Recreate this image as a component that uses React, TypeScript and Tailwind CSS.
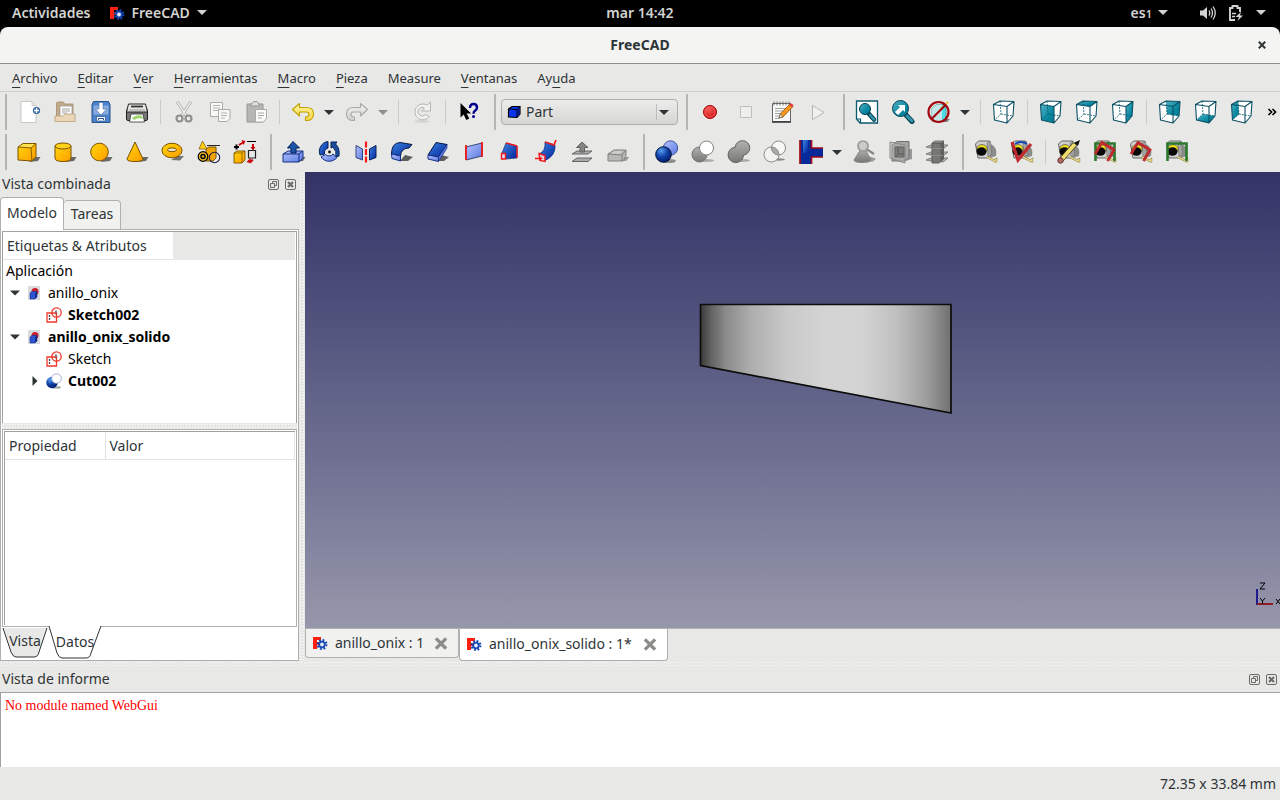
import React from 'react';

interface IconProps {
  className?: string;
  children: React.ReactNode;
}

function Icon({ className = 'w-6 h-6', children }: IconProps) {
  return (
    <svg viewBox="0 0 24 24" className={className} fill="none" aria-hidden="true">
      {children}
    </svg>
  );
}

// Gradients shared by every icon
function Gradients() {
  return (
    <svg className="absolute w-0 h-0" aria-hidden="true">
      <defs>
        <linearGradient id="gold" x1="0" y1="0" x2="1" y2="1">
          <stop offset="0" stopColor="#ffd60a" />
          <stop offset="1" stopColor="#ff9d00" />
        </linearGradient>
        <linearGradient id="blue" x1="0" y1="0" x2="1" y2="1">
          <stop offset="0" stopColor="#3d84e0" />
          <stop offset="1" stopColor="#00239b" />
        </linearGradient>
        <linearGradient id="lightBlue" x1="0" y1="0" x2="1" y2="1">
          <stop offset="0" stopColor="#b5c6ff" />
          <stop offset="1" stopColor="#5a77e0" />
        </linearGradient>
        <linearGradient id="gray" x1="0" y1="0" x2="0" y2="1">
          <stop offset="0" stopColor="#b2b2b0" />
          <stop offset="1" stopColor="#777775" />
        </linearGradient>
        <linearGradient id="teal" x1="0" y1="0" x2="1" y2="1">
          <stop offset="0" stopColor="#55b4c8" />
          <stop offset="0.6" stopColor="#0a88a0" />
          <stop offset="1" stopColor="#037c93" />
        </linearGradient>
        <linearGradient id="silver" x1="0" y1="0" x2="0" y2="1">
          <stop offset="0" stopColor="#f3f3f2" />
          <stop offset="1" stopColor="#cfcfcd" />
        </linearGradient>
        <linearGradient id="butter" x1="0" y1="0" x2="0" y2="1">
          <stop offset="0" stopColor="#fff6a0" />
          <stop offset="1" stopColor="#f2d648" />
        </linearGradient>
        <radialGradient id="blueBall" cx="0.35" cy="0.25" r="0.8">
          <stop offset="0" stopColor="#5aa0f0" />
          <stop offset="0.5" stopColor="#1243a8" />
          <stop offset="1" stopColor="#00186a" />
        </radialGradient>
        <radialGradient id="redBall" cx="0.4" cy="0.3" r="0.8">
          <stop offset="0" stopColor="#f65a5a" />
          <stop offset="1" stopColor="#cc0c0c" />
        </radialGradient>
        <linearGradient id="ring">
          <stop offset="0" stopColor="#3a3a3a" />
          <stop offset="0.04" stopColor="#606060" />
          <stop offset="0.1" stopColor="#8a8a8a" />
          <stop offset="0.2" stopColor="#adadad" />
          <stop offset="0.35" stopColor="#cacaca" />
          <stop offset="0.5" stopColor="#d4d4d4" />
          <stop offset="0.65" stopColor="#d3d3d3" />
          <stop offset="0.78" stopColor="#c0c0c0" />
          <stop offset="0.9" stopColor="#9e9e9e" />
          <stop offset="1" stopColor="#707070" />
        </linearGradient>
      </defs>
    </svg>
  );
}

const Logo = () => (
  <svg viewBox="0 0 16 16" className="w-4 h-4 shrink-0" aria-hidden="true">
    <path d="M1 2h8v3H5v2h3v3H5v4H1z" fill="#ff2010" />
    <circle cx="10" cy="9.500" r="4.500" fill="none" stroke="#1546b5" strokeWidth="2" strokeDasharray="1.800 1.734" />
    <circle cx="10" cy="9.500" r="2.800" fill="#e8ecf5" stroke="#1546b5" strokeWidth="1.800" />
  </svg>
);

const Shadow = () => <path d="M12 22l9-1 2.500-4H16z" fill="#000" fillOpacity="0.550" />;

/* File and edit icons */
const NewIcon = () => (
  <Icon>
    <path d="M4 1.500h11l4 4V22.500H4z" fill="#fff" stroke="#bdbdbb" strokeWidth="0.800" />
    <path d="M15 1.500v4h4" fill="#e4e4e2" stroke="#c4c4c2" strokeWidth="0.700" />
    <circle cx="19.500" cy="10.500" r="3.600" fill="#3465a4" />
    <path d="M19.500 8v5M17 10.500h5" stroke="#fff" strokeWidth="1.300" />
  </Icon>
);
const OpenIcon = () => (
  <Icon>
    <path d="M3.500 21V3l1-1h6l1 2h8.500V21z" fill="#c3ab89" stroke="#a38b68" strokeWidth="0.800" />
    <path d="M7 6h12v12H7z" fill="#fff" stroke="#999" strokeWidth="0.800" />
    <path d="M9 9h8M9 11h8M9 13h5" stroke="#999" strokeWidth="0.900" />
    <path d="M2 21.500v-5.500h8l2-2h10v7.500z" fill="#ecd6b8" stroke="#b99f79" strokeWidth="0.800" />
  </Icon>
);
const SaveIcon = () => (
  <Icon>
    <path d="M4.500 1.500h15l1.500 3v18H3v-18z" fill="#4b83cb" stroke="#27538f" />
    <path d="M4.500 5.500h15v9h-15z" fill="#86abe0" />
    <path d="M10 2.500h4V9h3.500L12 15 6.500 9H10z" fill="#fff" stroke="#4b71a8" strokeWidth="0.600" />
    <path d="M7.500 21v-4.500h9V21z" fill="#fff" stroke="#27538f" strokeWidth="0.700" />
    <path d="M9.500 20v-1.500h5V20" stroke="#27538f" />
  </Icon>
);
const PrintIcon = () => (
  <Icon>
    <rect x="1.500" y="9" width="21" height="11.500" rx="1.500" fill="#777" stroke="#1e1e1e" />
    <path d="M3.500 4h17l2 8h-21z" fill="#e6e6e4" stroke="#222" />
    <path d="M6 6.500h12" stroke="#333" strokeWidth="1.800" />
    <path d="M4 10h16" stroke="#aaa" strokeWidth="1.200" />
    <path d="M6 14h12l1.500 8h-15z" fill="#fff" stroke="#333" strokeWidth="0.800" />
    <path d="M7 18q5-4 10-2l1 3q-5-2-9 1z" fill="#9fd36c" />
  </Icon>
);
const CutIcon = () => (
  <Icon>
    <path d="M5 1.500L14.500 16M19 1.500L9.500 16" stroke="#a7a7a5" strokeWidth="3" />
    <path d="M5 1.500L14.500 16M19 1.500L9.500 16" stroke="#eee" strokeWidth="1.400" />
    <circle cx="7.500" cy="18.500" r="3" stroke="#8f8f8d" strokeWidth="2.200" />
    <circle cx="16.500" cy="18.500" r="3" stroke="#8f8f8d" strokeWidth="2.200" />
  </Icon>
);
const CopyIcon = () => (
  <Icon>
    <path d="M2.500 2.500h12v14h-12z" fill="#f8f8f7" stroke="#aaaaa8" />
    <path d="M5 5.500h7M5 8h7M5 10.500h7" stroke="#b4b4b2" strokeWidth="1.200" />
    <path d="M10.500 9.500h11.500v9l-3 3h-8.500z" fill="#f8f8f7" stroke="#aaaaa8" />
    <path d="M13 13h6M13 15.500h6M13 18h4" stroke="#b4b4b2" strokeWidth="1.200" />
  </Icon>
);
const PasteIcon = () => (
  <Icon>
    <path d="M3 4h16v18H3z" fill="#b6b6b4" stroke="#969694" />
    <path d="M7 6V4l3-2.500h3L15 4v2z" fill="#ddd" stroke="#969694" />
    <path d="M11.500 9.500h11v9l-3 3.500h-8z" fill="#fafaf9" stroke="#aaaaa8" />
    <path d="M14 13h6M14 15.500h6M14 18h4" stroke="#aaa" strokeWidth="1.200" />
  </Icon>
);
const undoPath = 'M8.500 3.500L1.500 9.500l7 6.500v-4h7q2.500 0 2.500 2.500T14.500 17v3.500q8 .5 8-6.500 0-6.500-7-6.500h-7z';
const UndoIcon = () => (
  <Icon>
    <path d={undoPath} fill="url(#butter)" stroke="#c4a000" strokeWidth="1.100" strokeLinejoin="round" />
  </Icon>
);
const RedoIcon = () => (
  <Icon>
    <path d={undoPath} transform="matrix(-1 0 0 1 24 0)" fill="url(#silver)" stroke="#a9a9a7" strokeWidth="1.100" strokeLinejoin="round" />
  </Icon>
);
const RefreshIcon = () => (
  <Icon>
    <ellipse cx="12" cy="21.500" rx="8" ry="1.500" fill="#d4d4d2" />
    <path d="M19.500 16.500A8 8 0 1 1 17 5L20.500 2v9h-9L14.500 8A4.300 4.300 0 1 0 15.500 14.500z" fill="#f1f1f0" stroke="#b5b5b3" strokeLinejoin="round" />
  </Icon>
);
const WhatsThisIcon = () => (
  <Icon>
    <path d="M3.500 3v14.500l3.200-3 2.600 5.500 3-1.500-2.700-5h4.500z" fill="#000" />
    <path d="M13 8q0-4 3.500-4T20 7.500q0 2-2 3.200-1.500 1-1.500 3" stroke="#000090" strokeWidth="2.400" />
    <circle cx="16.500" cy="16.500" r="1.500" fill="#000090" />
  </Icon>
);

/* Macro icons */
const RecordIcon = () => (
  <Icon>
    <circle cx="12" cy="12" r="6.500" fill="url(#redBall)" stroke="#a40000" />
    <circle cx="12" cy="12" r="5" stroke="#ff7070" strokeWidth="0.700" />
  </Icon>
);
const StopIcon = () => (
  <Icon>
    <path d="M6.500 6.500h11v11h-11z" fill="#efefee" stroke="#bebebc" />
  </Icon>
);
const MacroIcon = () => (
  <Icon>
    <path d="M2.500 3.500h18v18h-18z" fill="#fafafa" stroke="#666" />
    <path d="M2 22h19" stroke="#333" strokeWidth="1.500" />
    <path d="M4 1.500v4M7 1.500v4M10 1.500v4M13 1.500v4M16 1.500v4M19 1.500v4" stroke="#666" strokeWidth="0.900" />
    <path d="M5 8.500h11M5 11h9M5 13.500h6M5 16h4M5 18.500h4" stroke="#999" strokeWidth="0.900" />
    <path d="M9 18l1.500-4.500L20 4l3 2.500L13 17z" fill="#f7971d" stroke="#8a4a00" strokeWidth="0.700" />
    <path d="M9 18l1.500-4.500L13 17z" fill="#f5dfb8" stroke="#333" strokeWidth="0.500" />
    <path d="M19 5l1.500-2 3 2-1.500 2.500z" fill="#e23b3b" />
  </Icon>
);
const PlayIcon = () => (
  <Icon>
    <path d="M6.500 5.500v14L18 12.500z" fill="#f1f1f0" stroke="#b6b6b4" />
  </Icon>
);

/* View icons */
const FitAllIcon = () => (
  <Icon>
    <path d="M1.500 1h21v22H5l-3.500-4z" fill="#fff" stroke="#0b5a70" strokeWidth="1.300" />
    <path d="M2 19h3.500v4" stroke="#0b5a70" strokeWidth="1.200" />
    <path d="M14 14l5 5.500" stroke="#073f50" strokeWidth="4.500" strokeLinecap="round" />
    <path d="M15 15l4 4.500" stroke="#2f95ab" strokeWidth="2.500" strokeLinecap="round" />
    <circle cx="10" cy="9" r="5.500" fill="url(#teal)" stroke="#073f50" />
  </Icon>
);
const FitSelectionIcon = () => (
  <Icon>
    <path d="M15 15l6 6.500" stroke="#073f50" strokeWidth="5" strokeLinecap="round" />
    <path d="M16 16l5 5" stroke="#2f95ab" strokeWidth="3" strokeLinecap="round" />
    <circle cx="9.500" cy="8.500" r="8" fill="url(#teal)" stroke="#073f50" />
    <path d="M4 12l5-5-2-2h7v7l-2-2-5 5z" fill="#fff" />
  </Icon>
);
const DrawStyleIcon = () => (
  <Icon>
    <path d="M10 22h10l3-3h-4z" fill="#777" />
    <path d="M5 8l5-3.500h9V18l-3 3H5z" fill="#4fdfe2" stroke="#12818c" strokeWidth="0.700" />
    <path d="M5 8l5-3.500h5V21H5z" fill="#c5e6e6" />
    <path d="M14 9l7-7" stroke="#f2c01c" strokeWidth="2" strokeDasharray="3 1" />
    <circle cx="11.500" cy="12" r="10" stroke="#a3060e" strokeWidth="2.200" />
    <path d="M4.500 5L18.500 19" stroke="#a3060e" strokeWidth="2.200" transform="matrix(-1 0 0 1 23 0)" />
  </Icon>
);

const cubeFaces = {
  none: '',
  front: 'M1.500 4.500L15 6.500V23L2.500 20z',
  top: 'M1.500 4.500L8 1L22 1.500L15 6.500z',
  right: 'M15 6.500L22 1.500L21 16L15 23z',
  rear: 'M8 1L22 1.500L21 16L9 14z',
  bottom: 'M2.500 20L9 14L21 16L15 23z',
  left: 'M1.500 4.500L8 1L9 14L2.500 20z',
};

function ViewCube({ face }: { face: keyof typeof cubeFaces }) {
  return (
    <Icon>
      <path d="M1.500 4.500L8 1L22 1.500L21 16L15 23L2.500 20z" fill="#fff" />
      <path d={cubeFaces[face]} fill="url(#teal)" />
      <path d="M8 1L9 14L2.500 20M9 14L21 16" stroke="#0b5a70" strokeWidth="0.800" strokeDasharray="2 1" />
      <path
        d="M1.500 4.500L8 1L22 1.500L21 16L15 23L2.500 20zM1.500 4.500L15 6.500V23M15 6.500L22 1.500"
        stroke="#0b4f63"
        strokeWidth="1.100"
        strokeLinejoin="round"
      />
    </Icon>
  );
}

/* Primitive icons */
const BoxIcon = () => (
  <Icon>
    <Shadow />
    <path d="M1 7l5-3.500h13v13l-4 4.500-14-1z" fill="url(#gold)" stroke="#7a5200" />
    <path d="M2 6.800L6.500 4H18l-4 3.500z" fill="#ffe04a" />
    <path d="M1 7l13 1 5-4.500M14 8l1 13" stroke="#7a5200" strokeWidth="0.900" />
  </Icon>
);
const CylinderIcon = () => (
  <Icon>
    <Shadow />
    <path d="M2 6v12q0 3.500 8 3.500t8-3.500V6z" fill="url(#gold)" stroke="#7a5200" />
    <ellipse cx="10" cy="6" rx="8" ry="3" fill="#ffd21a" stroke="#7a5200" />
  </Icon>
);
const SphereIcon = () => (
  <Icon>
    <Shadow />
    <circle cx="10.500" cy="12" r="8.800" fill="url(#gold)" stroke="#7a5200" />
  </Icon>
);
const ConeIcon = () => (
  <Icon>
    <Shadow />
    <path d="M10 2L2 19q0 2.500 8 2.500t8-2.500z" fill="url(#gold)" stroke="#7a5200" strokeLinejoin="round" />
  </Icon>
);
const TorusIcon = () => (
  <Icon>
    <path d="M10 20l9 .5 4-4.500H17z" fill="#000" fillOpacity="0.500" />
    <ellipse cx="11" cy="10.500" rx="10" ry="7.300" fill="url(#gold)" stroke="#7a5200" />
    <ellipse cx="11" cy="9.800" rx="4.500" ry="1.900" fill="#eee6c8" stroke="#7a5200" />
  </Icon>
);
const PrimitivesIcon = () => (
  <Icon>
    <path d="M9 9l3-2h7v11l-3 3H9z" fill="#f0a400" stroke="#7a5200" />
    <path d="M5.500 1L2 9h8z" fill="#ffd21a" stroke="#7a5200" strokeWidth="0.700" />
    <circle cx="6" cy="16.500" r="4.800" fill="#e8b52a" stroke="#000" strokeWidth="1.200" />
    <circle cx="6" cy="16.500" r="2" stroke="#000" strokeWidth="1.500" />
    <path d="M10 5.500h13" stroke="#111" strokeWidth="0.900" />
    <circle cx="17.500" cy="17.500" r="5.200" stroke="#1b2350" strokeWidth="1.100" />
  </Icon>
);
const ShapeBuilderIcon = () => (
  <Icon>
    <path d="M1 13l3-2h8v9l-3 3H1z" fill="url(#gold)" stroke="#7a5200" strokeWidth="0.900" />
    <path d="M1 13h8l3-2M9 13v10" stroke="#7a5200" strokeWidth="0.700" />
    <path d="M3.500 4.500v5M1 7h5" stroke="#000" strokeWidth="2" />
    <path d="M14 1.500h9" stroke="#000" />
    <path d="M6 5l4-2.500M20 4v5M20 20l-4 2" stroke="#c8000a" strokeWidth="2" />
    <path d="M8.500 0l4 1-2 4zM17.500 7h5L20 10.500zM17.500 18l-4 4 5 1.500z" fill="#c8000a" />
    <path d="M15.500 10.500h7V18h-7z" stroke="#222" strokeWidth="1.200" />
  </Icon>
);

/* Part tool icons */
const ExtrudeIcon = () => (
  <Icon>
    <Shadow />
    <path d="M1 14l5-3h15v7l-4 4H1z" fill="url(#lightBlue)" stroke="#152f86" />
    <path d="M1 14h16v8M17 14l4-3" stroke="#152f86" />
    <path d="M11 1.500L5.500 8H9v5h5V8h3.500z" fill="#1a56a8" stroke="#06235c" />
  </Icon>
);
const RevolveIcon = () => (
  <Icon>
    <path d="M10 1.500A10 10 0 0 0 2 15L6.500 14A5.500 5.500 0 0 1 10 8z" fill="url(#blue)" stroke="#06235c" />
    <path d="M3 17A10 10 0 0 0 19 17.500L15 14A5 5 0 0 1 7.500 14.500z" fill="url(#lightBlue)" stroke="#152f86" />
    <path d="M13 8V2h6l-1.500 2Q22 8 21 16l-3 1q1-6-3-10z" fill="#1a4d9c" stroke="#06235c" />
    <circle cx="11.500" cy="12" r="1.400" fill="#111" />
  </Icon>
);
const MirrorIcon = () => (
  <Icon>
    <path d="M2 5.500L8.500 9v11L2 17.500z" fill="url(#lightBlue)" stroke="#34447c" />
    <path d="M22 5.500L15.500 9v11l6.500-2.500z" fill="url(#blue)" stroke="#06235c" />
    <path d="M12 1.500v21" stroke="#ff1a1a" strokeWidth="2.200" strokeDasharray="6 1.500" />
  </Icon>
);
const FilletIcon = () => (
  <Icon>
    <path d="M10 21h8l5-4-8-2z" fill="#000" fillOpacity="0.600" />
    <path d="M1.500 14Q1.500 3 10 2.500l12 2-3 3.500q-8 0-8.500 8z" fill="url(#blue)" stroke="#04163f" />
    <path d="M1.500 14l9 2v5L2 18.500z" fill="url(#lightBlue)" stroke="#152f86" />
  </Icon>
);
const ChamferIcon = () => (
  <Icon>
    <path d="M12 21h6l5-4-8-2z" fill="#000" fillOpacity="0.600" />
    <path d="M10 2.500l11 2L12.500 17l-10.500-2z" fill="url(#blue)" stroke="#04163f" />
    <path d="M2 15l10.500 2v4.500L2 19z" fill="url(#lightBlue)" stroke="#152f86" />
    <path d="M21 4.500V8l-8.500 13.500V17z" fill="#5677dc" stroke="#152f86" strokeWidth="0.700" />
  </Icon>
);
const RuledIcon = () => (
  <Icon>
    <path d="M4 7l16-4v13L4 20z" fill="url(#lightBlue)" stroke="#34447c" />
    <path d="M4 5v15M20 2v15" stroke="#f01818" strokeWidth="1.800" />
  </Icon>
);
const LoftIcon = () => (
  <Icon>
    <path d="M8 3l11 3v12l-11 1-4-6z" fill="url(#blue)" stroke="#34447c" strokeWidth="0.800" />
    <path d="M8 3l11 3M19 6v12" stroke="#f01818" strokeWidth="1.400" />
    <path d="M3.500 13.500h4v5.500h-4z" fill="#d6ddff" stroke="#f01818" strokeWidth="1.400" />
  </Icon>
);
const SweepIcon = () => (
  <Icon>
    <path d="M5 14q7-3 6-12l10 3q1 11-11 16z" fill="url(#blue)" stroke="#152f86" strokeWidth="0.800" />
    <path d="M11 2l9 3 2-5M1 18.500h5" stroke="#f01818" strokeWidth="1.700" />
    <path d="M5 13.500l6 2v6l-5-1z" fill="#e4cde0" stroke="#f01818" strokeWidth="1.400" />
    <path d="M5.500 16l3 2.500-3 2.500z" fill="#f01818" />
  </Icon>
);
const OffsetIcon = () => (
  <Icon>
    <path d="M2 21.500l5-3.500h15l-4 3.500zM2 14l5-3h15l-4 3z" fill="#aaa" stroke="#666" />
    <path d="M12 2L6.500 7.500H10V12h4.500V7.500H18z" fill="#858583" stroke="#60605e" />
  </Icon>
);
const ThicknessIcon = () => (
  <Icon>
    <path d="M14 21l6 0 3.500-4H18z" fill="#999" />
    <path d="M2 14l6-4h12v6l-3 5H2z" fill="#b8b8b6" stroke="#80807e" />
    <path d="M2 14l14 1 4-5M16 15v6" stroke="#80807e" />
    <path d="M5 13.500l4-2.500h7l-2 2.700z" fill="#d0d0ce" />
  </Icon>
);
const BooleanIcon = () => (
  <Icon>
    <ellipse cx="14" cy="21" rx="7" ry="2" fill="#000" fillOpacity="0.400" />
    <circle cx="15.500" cy="8" r="7.200" fill="url(#lightBlue)" stroke="#42549c" />
    <circle cx="8.500" cy="14.500" r="7.800" fill="url(#blueBall)" stroke="#020f3c" />
  </Icon>
);
const CutShapeIcon = () => (
  <Icon>
    <ellipse cx="16" cy="20.500" rx="7" ry="1.500" fill="#aaa" />
    <circle cx="8.500" cy="14.500" r="7.500" fill="url(#gray)" stroke="#70706e" />
    <circle cx="15.500" cy="8" r="7" fill="#fff" stroke="#80807e" />
  </Icon>
);
const FuseIcon = () => (
  <Icon>
    <ellipse cx="16" cy="20.500" rx="7" ry="1.500" fill="#aaa" />
    <path
      d="M8.200 7.200A7.300 7.300 0 1 1 16.500 15.200A7.700 7.700 0 1 1 8.200 7.200z"
      fill="url(#gray)"
      stroke="#60605e"
    />
  </Icon>
);
const CommonIcon = () => (
  <Icon>
    <ellipse cx="16" cy="19.500" rx="6" ry="1.200" fill="#888" />
    <circle cx="15.500" cy="8" r="7" fill="#f8f8f7" />
    <circle cx="8.500" cy="14.500" r="7.500" fill="#f1f1f0" />
    <path d="M8.500 7a7 7 0 0 0 7.300 8a7.500 7.500 0 0 0-7.300-8z" fill="#aaa" />
    <circle cx="15.500" cy="8" r="7" stroke="#8a8a88" />
    <circle cx="8.500" cy="14.500" r="7.500" stroke="#8a8a88" />
  </Icon>
);
const JoinIcon = () => (
  <Icon>
    <path d="M1 0h11v24H1z" fill="#062a9a" />
    <path d="M4 0h5v13H4z" fill="url(#blue)" />
    <path d="M11 8h13v9H11z" fill="#062a9a" />
    <path d="M1 0v24M12.500 0v8H24M24 17H12.500v7" stroke="#a30c18" strokeWidth="1.700" />
  </Icon>
);
const CheckGeometryIcon = () => (
  <Icon>
    <path d="M14 22l6-.500 3-3-7-2z" fill="#999" />
    <path d="M8 9L1 20q0 2.500 8 2.500t9-2.500L12 9z" fill="url(#gray)" stroke="#888" />
    <circle cx="10" cy="6" r="5" fill="#cacac8" stroke="#999997" strokeWidth="1.700" />
    <path d="M14 9.500l7 4.500" stroke="#888886" strokeWidth="2.200" />
  </Icon>
);
const SectionIcon = () => (
  <Icon>
    <path d="M17 21l6-2V9h-4z" fill="#999" />
    <path d="M3 5l5-3.500h12V17l-4 4H3z" fill="#a5a5a3" stroke="#70706e" />
    <path d="M1 2l15 3v18L1 18z" fill="#b0b0ae" fillOpacity="0.500" stroke="#8b8b89" />
    <path d="M6 7h9v10H6z" fill="#7d7d7b" stroke="#636361" />
    <path d="M6 17l3-3h6M9 14V7" stroke="#5a5a58" />
  </Icon>
);
const CrossSectionsIcon = () => (
  <Icon>
    <path d="M1 7l5-2h17l-5 4zM1 14l5-2h17l-5 4zM1 20l5-2h17l-5 4z" fill="#b0b0ae" stroke="#80807e" />
    <path d="M7 3h9v18l-2 2H7z" fill="#777775" stroke="#5c5c5a" />
    <path d="M16 3l3-2v18l-3 3z" fill="#5f5f5d" />
    <path d="M7 3l3-2h9l-3 2z" fill="#9a9a98" stroke="#555" strokeWidth="0.700" />
    <path d="M1 7l6 1.500h11M1 14l6 1.500h11M1 20l6 1.500" stroke="#92928f" strokeWidth="0.800" />
  </Icon>
);

/* Measure icons, all built on the same tape */
function Tape({ children }: { children?: React.ReactNode }) {
  return (
    <Icon>
      <path d="M17 4q7 4 5 12l-6 2z" fill="#000" fillOpacity="0.400" />
      <path d="M1.500 4l3-3h11l1 14-3 3H4z" fill="#d0d0ce" stroke="#666" />
      <path d="M13 3l3.500-1.500 1 13-3.500 3z" fill="#a2a2a0" stroke="#666" strokeWidth="0.500" />
      <path d="M3 7q5-5 10 0v4H3z" fill="#f2e01a" stroke="#333" strokeWidth="0.600" />
      <ellipse cx="7.500" cy="11.500" rx="5" ry="4.300" fill="#080808" />
      <path d="M13 17l7 3.500 2-1v3" stroke="#8a7d40" strokeWidth="2.400" />
      <path d="M13 17l7 3.500 2-1v3" stroke="#eadb8c" strokeWidth="1.300" />
      {children}
    </Icon>
  );
}

const redFrame = <path d="M2 14L9 2.500l12 7.500L14.500 21" stroke="#c02a2e" strokeWidth="2.800" />;
const greenFrame = <path d="M2.500 21V3.500h19V21" stroke="#2a7a2c" strokeWidth="2.600" />;

interface ToolButtonProps {
  label: string;
  disabled?: boolean;
  children: React.ReactNode;
}

function ToolButton({ label, disabled, children }: ToolButtonProps) {
  return (
    <button type="button" title={label} aria-label={label} disabled={disabled} className="w-9 h-9 flex items-center justify-center shrink-0">
      {children}
    </button>
  );
}

function MenuArrow({ label, color = '#2e3436' }: { label: string; color?: string }) {
  return (
    <button type="button" aria-label={label} className="w-[18px] h-9 pr-0.5 flex items-center justify-center shrink-0">
      <svg viewBox="0 0 10 5" className="w-2.5 h-[5px]" aria-hidden="true">
        <path d="M0 0h10L5 5z" fill={color} />
      </svg>
    </button>
  );
}

const Separator = () => <span className="w-px h-6 mx-[5px] bg-[#cbcbc9] shrink-0" />;

function ToolGroup({ children }: { children: React.ReactNode }) {
  return (
    <div className="flex items-center pr-[7px] shrink-0">
      <span className="w-0.5 h-9 mr-1 bg-[#b5b5b3]" />
      {children}
    </div>
  );
}

const menus = [
  ['', 'A', 'rchivo'],
  ['', 'E', 'ditar'],
  ['', 'V', 'er'],
  ['', 'H', 'erramientas'],
  ['', 'M', 'acro'],
  ['', 'P', 'ieza'],
  ['Measure', '', ''],
  ['', 'V', 'entanas'],
  ['Ay', 'u', 'da'],
];

function DockTitle({ title }: { title: string }) {
  return (
    <div className="h-6 pl-0.5 pr-[3px] flex items-center justify-between text-sm">
      <h2>{title}</h2>
      <div className="flex gap-1.5">
        <button type="button" aria-label={`Desacoplar ${title}`}>
          <svg viewBox="0 0 11 11" className="w-[11px] h-[11px]" fill="none" stroke="#6c6c6a">
            <rect x="0.500" y="0.500" width="10" height="10" rx="1.500" />
            <path d="M4.500 4.500v-2h4v4h-2M2.500 4.500h4v4h-4z" />
          </svg>
        </button>
        <button type="button" aria-label={`Cerrar ${title}`}>
          <svg viewBox="0 0 11 11" className="w-[11px] h-[11px]" fill="none" stroke="#6c6c6a">
            <rect x="0.500" y="0.500" width="10" height="10" rx="1.500" />
            <path d="M3 3l5 5M8 3l-5 5" strokeWidth="2.200" />
          </svg>
        </button>
      </div>
    </div>
  );
}

const dots = 'bg-[radial-gradient(#fff_1px,transparent_1px)] bg-[length:3px_3px]';

const DocumentIcon = () => (
  <svg viewBox="0 0 14 14" className="w-3.5 h-3.5 shrink-0" aria-hidden="true">
    <path d="M1 0h12v14H1z" fill="#d8dadc" />
    <circle cx="8" cy="5.500" r="3.500" fill="#c8202c" />
    <path d="M3 7l2-1.500h5V11l-2 2H3z" fill="#2f54d0" stroke="#173090" strokeWidth="0.600" />
    <path d="M8 7l2-1.500V11l-2 2z" fill="#122f96" />
  </svg>
);
const SketchIcon = () => (
  <svg viewBox="0 0 16 16" className="w-4 h-4 shrink-0" fill="none" stroke="#f0392b" aria-hidden="true">
    <path d="M1 6h9.500v9H1z" fill="#fff" strokeWidth="1.300" />
    <circle cx="10.500" cy="5.500" r="4.700" strokeWidth="1.300" />
    <path d="M3.500 8v5M10 3.500v4" stroke="#444" strokeWidth="1.300" strokeDasharray="2 1" />
  </svg>
);
const TreeCutIcon = () => (
  <svg viewBox="0 0 16 16" className="w-4 h-4 shrink-0" aria-hidden="true">
    <path d="M6 15.500h8l1-2H9z" fill="#999" />
    <circle cx="6" cy="9.500" r="5.700" fill="url(#blueBall)" />
    <circle cx="10.500" cy="5.500" r="4.800" fill="#fff" stroke="#9fa7cf" strokeWidth="0.900" />
  </svg>
);

type TreeRow = {
  label: string;
  indent: string;
  bold?: boolean;
  arrow?: 'open' | 'closed';
  icon: React.ReactNode;
};

const treeRows: TreeRow[] = [
  { label: 'anillo_onix', indent: 'pl-[6px]', arrow: 'open', icon: <DocumentIcon /> },
  { label: 'Sketch002', indent: 'pl-[26px]', bold: true, icon: <SketchIcon /> },
  { label: 'anillo_onix_solido', indent: 'pl-[6px]', bold: true, arrow: 'open', icon: <DocumentIcon /> },
  { label: 'Sketch', indent: 'pl-[26px]', icon: <SketchIcon /> },
  { label: 'Cut002', indent: 'pl-[26px]', bold: true, arrow: 'closed', icon: <TreeCutIcon /> },
];

function ModelTree() {
  return (
    <div className="h-48 ml-px mr-px border-t border-l border-r border-[#a0a09e]">
      <div className="h-7 flex bg-[#e8e8e6] border-r border-white text-sm">
        <div className="w-[170px] pl-1 flex items-center bg-white border-b border-[#e4e4e4]">Etiquetas &amp; Atributos</div>
      </div>
      <ul role="tree" className="text-sm text-black">
        <li role="treeitem" className="h-[22px] pl-[3px] flex items-center">Aplicación</li>
        {treeRows.map(row => (
          <li key={row.label} role="treeitem" className={`h-[22px] flex items-center ${row.indent} ${row.bold ? 'font-bold' : ''}`}>
            <span className="w-3 mr-1 flex justify-center">
              {row.arrow && (
                <svg viewBox="0 0 10 10" className="w-2.5 h-2.5" fill="#2e3436" aria-hidden="true">
                  <path d={row.arrow === 'open' ? 'M0 2.500h10L5 7.500z' : 'M2.500 0v10L7.500 5z'} />
                </svg>
              )}
            </span>
            <span className="w-[18px] mr-[5px] flex justify-center">{row.icon}</span>
            {row.label}
          </li>
        ))}
      </ul>
    </div>
  );
}

function CombinedView() {
  return (
    <aside className="w-[299px] shrink-0 flex flex-col">
      <DockTitle title="Vista combinada" />
      <div role="tablist" className="flex items-end text-sm h-[33px]">
        <button type="button" role="tab" aria-selected="true" className="relative z-10 -mb-px w-16 h-[33px] pb-0.5 border border-b-0 border-[#b0b0ae] rounded-t bg-white">
          Modelo
        </button>
        <button type="button" role="tab" aria-selected="false" className="w-[57px] h-[29px] pb-0.5 border border-l-0 border-b-0 border-[#b0b0ae] rounded-t bg-[#f1f1f0]">
          Tareas
        </button>
      </div>
      <div className="flex-1 flex flex-col border border-[#b0b0ae] bg-white pt-px">
        <ModelTree />
        <div className={`h-[6px] ml-px mr-px bg-[#e8e8e6] ${dots}`} />
        <div className="flex-1 ml-px mr-px border border-[#b0b0ae] p-px">
          <div className="h-full border-t border-l border-[#a0a09e]">
            <table className="w-[290px] h-7 text-sm text-left border-collapse">
              <thead>
                <tr>
                  <th className="w-[100px] pl-1 font-normal border-r border-b border-[#e2e2e0]">Propiedad</th>
                  <th className="pl-1 font-normal border-r border-b border-[#e2e2e0]">Valor</th>
                </tr>
              </thead>
            </table>
          </div>
        </div>
        <div role="tablist" className="h-[33px] pl-px flex text-sm">
          <button type="button" role="tab" aria-selected="false" className="relative w-[46px] h-[31px] pb-1">
            <svg viewBox="0 0 46 32" className="absolute left-0 top-0 w-[46px] h-8" aria-hidden="true">
              <path d="M1 1l8 24q2 5 5 5h18q4 0 5-5l8-24" fill="#e8e8e6" stroke="#2e3436" />
            </svg>
            <span className="relative">Vista</span>
          </button>
          <button type="button" role="tab" aria-selected="true" className="relative w-[54px] h-[31px] pb-0.5">
            <svg viewBox="0 0 54 33" className="absolute left-0 -top-px w-[54px] h-[33px]" aria-hidden="true">
              <path d="M1 0l8 27q2 5 5 5h24q4 0 5-5l10-27" fill="#fff" stroke="#2e3436" />
            </svg>
            <span className="relative">Datos</span>
          </button>
        </div>
      </div>
    </aside>
  );
}

function CloseTabIcon() {
  return (
    <svg viewBox="0 0 14 14" className="w-3.5 h-3.5" aria-hidden="true">
      <path d="M3 3.500l8 8M11 3.500l-8 8" stroke="#8d8d8b" strokeWidth="3.200" strokeLinecap="square" />
    </svg>
  );
}

function Viewport() {
  return (
    <section className="flex-1 min-w-0 flex flex-col">
      <div className="relative flex-1 overflow-hidden bg-linear-to-b from-[#333366] to-[#9797ab]">
        <svg viewBox="0 0 975 456" className="absolute inset-0 w-full h-full" role="img" aria-label="anillo_onix_solido">
          <path d="M395.500 132.500h250.500v108.500l-250.500-47.500z" fill="url(#ring)" stroke="#0c0c0c" strokeWidth="1.700" />
        </svg>
        <svg viewBox="0 0 26 28" className="absolute right-0 bottom-[18px] w-[26px] h-7" fill="none" aria-hidden="true">
          <path d="M3 7v16" stroke="#1c1c90" strokeWidth="2" />
          <path d="M3 22h16" stroke="#8e1c22" strokeWidth="2" />
          <path d="M6 1h5L6 7h5M6 16l2.500 3L11 16M8.500 19v3M22 17l4 5M26 17l-4 5" stroke="#000" />
        </svg>
      </div>
      <div role="tablist" className="h-[33px] flex items-start border-t border-[#b0b0ae] text-sm">
        <div role="tab" aria-selected="false" className="h-[29px] w-[154px] px-1.5 flex items-center border border-t-0 border-[#b0b0ae] rounded-b bg-[#f1f1f0]">
          <Logo />
          <span className="ml-[7px] flex-1">anillo_onix : 1</span>
          <button type="button" aria-label="Cerrar anillo_onix" className="mr-1"><CloseTabIcon /></button>
        </div>
        <div role="tab" aria-selected="true" className="h-8 w-[209px] px-1.5 pb-px flex items-center border border-t-0 border-[#b0b0ae] rounded-b bg-white">
          <Logo />
          <span className="ml-[7px] flex-1">anillo_onix_solido : 1*</span>
          <button type="button" aria-label="Cerrar anillo_onix_solido" className="mr-1"><CloseTabIcon /></button>
        </div>
      </div>
    </section>
  );
}

const PanelArrow = () => (
  <svg viewBox="0 0 10 5" className="w-2.5 h-[5px]" aria-hidden="true">
    <path d="M0 0h10L5 5z" fill="#d3d3d1" />
  </svg>
);

export default function App() {
  return (
    <div className="min-h-screen flex flex-col bg-black text-[#2e3436] font-['Noto_Sans','Open_Sans',sans-serif] leading-5">
      <Gradients />

      <header className="h-[27px] px-3 pb-0.5 grid grid-cols-3 items-center text-[#d3d3d1] text-sm font-semibold">
        <div className="flex items-center">
          <button type="button">Actividades</button>
          <button type="button" className="ml-[18px] flex items-center gap-[7px]">
            <Logo />
            <span>FreeCAD</span>
            <PanelArrow />
          </button>
        </div>
        <time className="text-center">mar 14:42</time>
        <div className="flex items-center justify-end pr-0.5">
          <button type="button" className="flex items-center gap-1.5">
            <span>es<span className="text-[11px]">1</span></span>
            <PanelArrow />
          </button>
          <button type="button" aria-label="Menú del sistema" className="ml-8 flex items-center gap-3">
            <svg viewBox="0 0 16 16" className="w-4 h-4" fill="none" aria-hidden="true">
              <path d="M0 5.500h3L7 2v12L3 10.500H0z" fill="#d3d3d1" />
              <path d="M9 5.500q1.500 2.500 0 5M11 3.500q3 4.500 0 9M13 1.500q4.500 6.500 0 13" stroke="#d3d3d1" strokeWidth="1.300" />
            </svg>
            <svg viewBox="0 0 16 16" className="w-4 h-4" fill="none" aria-hidden="true">
              <path d="M7 15H2V3h2.500V1h5v2H12v4" stroke="#d3d3d1" strokeWidth="1.900" />
              <path d="M4 8.500h4M4 11.500h3" stroke="#d3d3d1" strokeWidth="1.500" />
              <path d="M13 7l-5.500 5H11l-1.500 4 5.500-5.500h-3z" fill="#d3d3d1" />
            </svg>
            <PanelArrow />
          </button>
        </div>
      </header>

      <div className="h-[37px] px-3 grid grid-cols-[1fr_auto_1fr] items-center bg-[#f4f4f3] border-b border-[#8f8f88] rounded-t-lg">
        <h1 className="col-start-2 text-sm font-bold">FreeCAD</h1>
        <button type="button" aria-label="Cerrar" className="justify-self-end mr-0.5">
          <svg viewBox="0 0 8 8" className="w-2 h-2" aria-hidden="true">
            <path d="M0.800 0.800l6.400 6.400M7.200 0.800L0.800 7.200" stroke="#2e3436" strokeWidth="2" />
          </svg>
        </button>
      </div>

      <div className="flex-1 flex flex-col bg-[#e8e8e6]">
        <nav className="h-7 px-0.5 flex items-center border-b border-[#cfcfcd] text-[13px]">
          {menus.map(([before, key, after]) => (
            <button key={before + key + after} type="button" className="px-2.5">
              {before}<u className="underline-offset-4">{key}</u>{after}
            </button>
          ))}
        </nav>

        <div className="h-10 pl-[5px] flex items-center overflow-hidden">
          <ToolGroup>
            <ToolButton label="Nuevo"><NewIcon /></ToolButton>
            <ToolButton label="Abrir"><OpenIcon /></ToolButton>
            <ToolButton label="Guardar"><SaveIcon /></ToolButton>
            <ToolButton label="Imprimir"><PrintIcon /></ToolButton>
            <Separator />
            <ToolButton label="Cortar" disabled><CutIcon /></ToolButton>
            <ToolButton label="Copiar" disabled><CopyIcon /></ToolButton>
            <ToolButton label="Pegar" disabled><PasteIcon /></ToolButton>
            <Separator />
            <ToolButton label="Deshacer"><UndoIcon /></ToolButton>
            <MenuArrow label="Historial de deshacer" />
            <ToolButton label="Rehacer" disabled><RedoIcon /></ToolButton>
            <MenuArrow label="Historial de rehacer" color="#8f8f8d" />
            <Separator />
            <ToolButton label="Actualizar" disabled><RefreshIcon /></ToolButton>
            <Separator />
            <ToolButton label="¿Qué es esto?"><WhatsThisIcon /></ToolButton>
          </ToolGroup>
          <ToolGroup>
            <div className="relative ml-px w-[177px] h-[26px] mr-px flex items-center">
              <select aria-label="Banco de trabajo" className="w-full h-full pl-6 appearance-none rounded border border-[#aeaeac] bg-linear-to-b from-[#ececea] to-[#d6d6d4] text-sm">
                <option>Part</option>
              </select>
              <svg viewBox="0 0 14 14" className="absolute left-1.5 w-3.5 h-3.5 pointer-events-none" aria-hidden="true">
                <path d="M1.500 4L5 1.500h8V9l-3 3.500L1.500 12z" fill="#0a35ee" stroke="#000" strokeWidth="1.200" />
                <path d="M1.500 4L10 4.500l3-3M10 4.500v8" fill="none" stroke="#000" />
                <path d="M10.500 5L13 2.500V9l-2.500 3z" fill="#031a80" />
              </svg>
              <span className="absolute right-[21px] w-px h-4 bg-[#bdbdbb]" />
              <svg viewBox="0 0 10 5" className="absolute right-[9px] w-2.5 h-[5px] pointer-events-none" aria-hidden="true">
                <path d="M0 0h10L5 5z" fill="#2e3436" />
              </svg>
            </div>
          </ToolGroup>
          <ToolGroup>
            <ToolButton label="Grabar macro"><RecordIcon /></ToolButton>
            <ToolButton label="Detener macro" disabled><StopIcon /></ToolButton>
            <ToolButton label="Macros"><MacroIcon /></ToolButton>
            <ToolButton label="Ejecutar macro" disabled><PlayIcon /></ToolButton>
          </ToolGroup>
          <ToolGroup>
            <ToolButton label="Ajustar todo"><FitAllIcon /></ToolButton>
            <ToolButton label="Ajustar selección"><FitSelectionIcon /></ToolButton>
            <ToolButton label="Estilo de dibujo"><DrawStyleIcon /></ToolButton>
            <MenuArrow label="Estilos de dibujo" />
            <Separator />
            <ToolButton label="Axonométrica"><ViewCube face="none" /></ToolButton>
            <Separator />
            <ToolButton label="Frontal"><ViewCube face="front" /></ToolButton>
            <ToolButton label="Superior"><ViewCube face="top" /></ToolButton>
            <ToolButton label="Derecha"><ViewCube face="right" /></ToolButton>
            <Separator />
            <ToolButton label="Posterior"><ViewCube face="rear" /></ToolButton>
            <ToolButton label="Inferior"><ViewCube face="bottom" /></ToolButton>
            <ToolButton label="Izquierda"><ViewCube face="left" /></ToolButton>
          </ToolGroup>
          <button type="button" aria-label="Más herramientas" className="shrink-0">
            <svg viewBox="0 0 10 8" className="w-2.5 h-2" fill="none" stroke="#000" strokeWidth="1.700" aria-hidden="true">
              <path d="M1.500 1l3 3-3 3M5.500 1l3 3-3 3" />
            </svg>
          </button>
        </div>

        <div className="h-10 pl-[5px] flex items-center overflow-hidden">
          <ToolGroup>
            <ToolButton label="Cubo"><BoxIcon /></ToolButton>
            <ToolButton label="Cilindro"><CylinderIcon /></ToolButton>
            <ToolButton label="Esfera"><SphereIcon /></ToolButton>
            <ToolButton label="Cono"><ConeIcon /></ToolButton>
            <ToolButton label="Toro"><TorusIcon /></ToolButton>
            <ToolButton label="Primitivas"><PrimitivesIcon /></ToolButton>
            <ToolButton label="Constructor de formas"><ShapeBuilderIcon /></ToolButton>
          </ToolGroup>
          <ToolGroup>
            <ToolButton label="Extruir"><ExtrudeIcon /></ToolButton>
            <ToolButton label="Revolución"><RevolveIcon /></ToolButton>
            <ToolButton label="Simetría"><MirrorIcon /></ToolButton>
            <ToolButton label="Redondeo"><FilletIcon /></ToolButton>
            <ToolButton label="Chaflán"><ChamferIcon /></ToolButton>
            <ToolButton label="Superficie reglada"><RuledIcon /></ToolButton>
            <ToolButton label="Puente"><LoftIcon /></ToolButton>
            <ToolButton label="Barrido"><SweepIcon /></ToolButton>
            <ToolButton label="Desfase" disabled><OffsetIcon /></ToolButton>
            <ToolButton label="Espesor" disabled><ThicknessIcon /></ToolButton>
          </ToolGroup>
          <ToolGroup>
            <ToolButton label="Booleana"><BooleanIcon /></ToolButton>
            <ToolButton label="Corte" disabled><CutShapeIcon /></ToolButton>
            <ToolButton label="Unión" disabled><FuseIcon /></ToolButton>
            <ToolButton label="Intersección" disabled><CommonIcon /></ToolButton>
            <ToolButton label="Conectar"><JoinIcon /></ToolButton>
            <MenuArrow label="Opciones de conexión" />
            <ToolButton label="Comprobar geometría" disabled><CheckGeometryIcon /></ToolButton>
            <ToolButton label="Sección" disabled><SectionIcon /></ToolButton>
            <ToolButton label="Secciones transversales" disabled><CrossSectionsIcon /></ToolButton>
          </ToolGroup>
          <ToolGroup>
            <ToolButton label="Medir lineal"><Tape /></ToolButton>
            <ToolButton label="Medir angular">
              <Tape>
                <path d="M5 4q6-4 12 0" stroke="#1546b5" strokeWidth="2" />
                <path d="M2 2l6 18L21 4" stroke="#c02a2e" strokeWidth="3.200" />
              </Tape>
            </ToolButton>
            <Separator />
            <ToolButton label="Borrar medidas">
              <Tape>
                <path d="M4 20L18 4" stroke="#4d4316" strokeWidth="5" />
                <path d="M5 19L18 4" stroke="#f2df74" strokeWidth="3.500" />
                <path d="M16.500 3l6.500-3-2 6z" fill="#111" />
                <circle cx="3.500" cy="20.500" r="2.700" fill="#b26a6a" stroke="#673535" />
              </Tape>
            </ToolButton>
            <ToolButton label="Alternar todo"><Tape>{greenFrame}{redFrame}</Tape></ToolButton>
            <ToolButton label="Alternar 3D"><Tape>{redFrame}</Tape></ToolButton>
            <ToolButton label="Alternar delta"><Tape>{greenFrame}</Tape></ToolButton>
          </ToolGroup>
        </div>

        <main className="flex-1 flex">
          <CombinedView />
          <div className={`w-1.5 shrink-0 ${dots}`} />
          <Viewport />
        </main>

        <div className={`h-[6px] ${dots}`} />
        <DockTitle title="Vista de informe" />
        <div role="log" className="mt-px h-[75px] px-1 pt-[3px] bg-white border-t border-l border-[#a0a09e] font-['Liberation_Serif',serif] text-sm text-[#ff0000]">
          No module named WebGui
        </div>
        <footer className="h-[33px] px-1 flex items-center justify-end text-sm">72.35 x 33.84 mm</footer>
      </div>
    </div>
  );
}
